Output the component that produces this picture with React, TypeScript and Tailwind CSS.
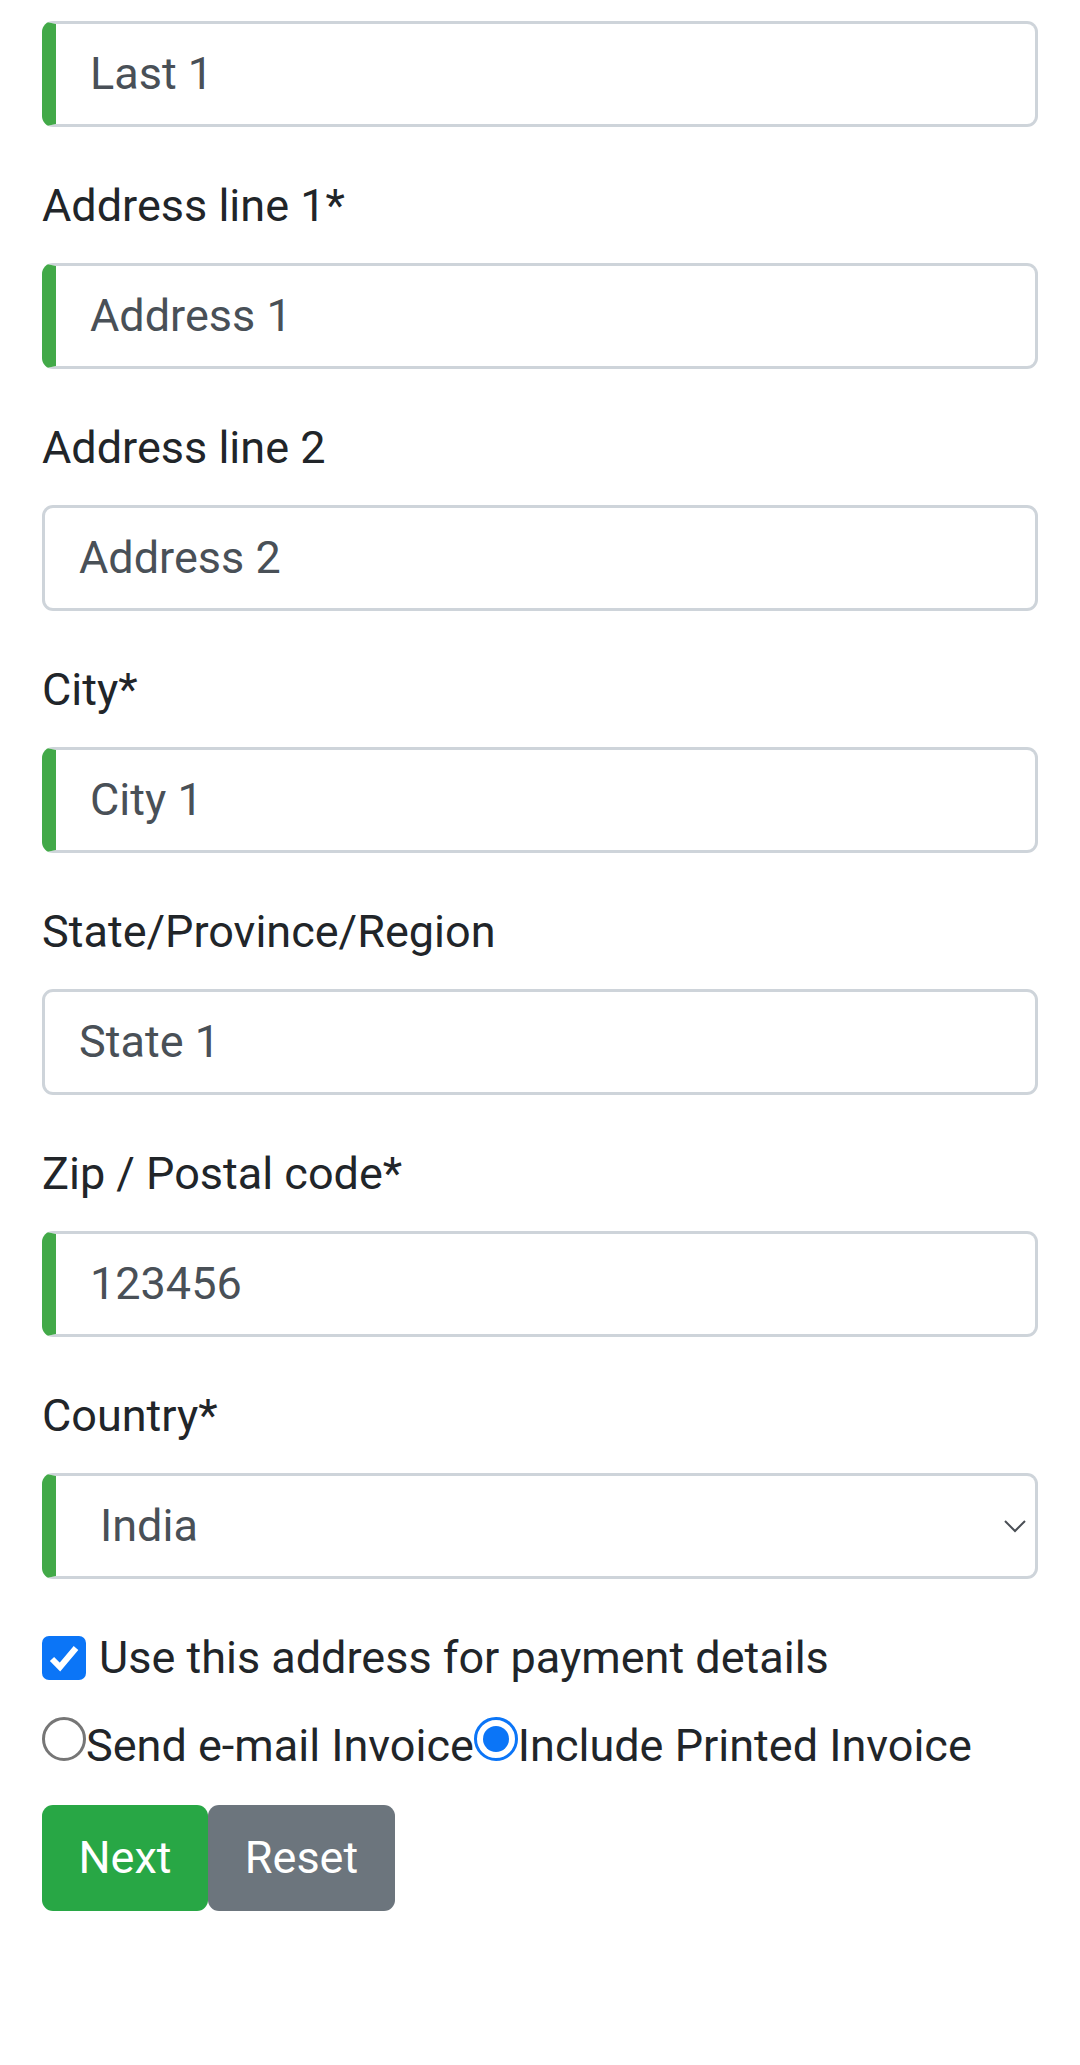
import React from "react"

const font = { fontFamily: "Roboto, 'Liberation Sans', sans-serif" }

interface FieldProps {
    label?: string
    value: string
    valid?: boolean
}

function Field({ label, value, valid }: FieldProps) {
    return (
        <div className="mb-[46px]">
            {label && <label className="block mb-[24px] text-[45px] leading-[66px] text-[#212529]">{label}</label>}
            <input
                defaultValue={value}
                className={`block w-full h-[106px] rounded-[11px] border-[3px] border-[#ced4da] bg-white pr-[34px] pl-[34px] pb-[2px] text-[45px] text-[#495057] outline-none ${valid ? "border-l-[14px] border-l-[#42A948]" : ""}`}
            />
        </div>
    )
}

function Radio({ checked }: { checked?: boolean }) {
    return (
        <span className={`relative inline-block h-[44px] w-[44px] rounded-full border-[3px] bg-white align-baseline ${checked ? "border-[#0b75f7]" : "border-[#767676]"}`}>
            {checked && <span className="absolute left-[6px] top-[6px] h-[26px] w-[26px] rounded-full bg-[#0b75f7]" />}
        </span>
    )
}

export default function App() {
    return (
        <div className="min-h-[2065px] bg-white pt-[21px] px-[42px]" style={font}>
            <Field value="Last 1" valid />
            <Field label="Address line 1*" value="Address 1" valid />
            <Field label="Address line 2" value="Address 2" />
            <Field label="City*" value="City 1" valid />
            <Field label="State/Province/Region" value="State 1" />
            <Field label="Zip / Postal code*" value="123456" valid />

            <div className="mb-[46px]">
                <label className="block mb-[24px] text-[45px] leading-[66px] text-[#212529]">Country*</label>
                <div className="relative">
                    <select
                        defaultValue="India"
                        className="block w-full h-[106px] appearance-none rounded-[11px] border-[3px] border-l-[14px] border-[#ced4da] border-l-[#42A948] bg-white pl-[44px] text-[45px] text-[#495057] outline-none"
                    >
                        <option>India</option>
                        <option>USA</option>
                    </select>
                    <svg className="pointer-events-none absolute right-[12px] top-[47px]" width="22" height="13" viewBox="0 0 22 13" fill="none">
                        <path d="M1 1l10 10L21 1" stroke="#4a4f55" strokeWidth="2" />
                    </svg>
                </div>
            </div>

            <div className="flex items-center h-[66px] text-[45px] text-[#212529]">
                <span className="flex h-[44px] w-[44px] shrink-0 items-center justify-center rounded-[7px] bg-[#0b75f7]">
                    <svg width="32" height="28" viewBox="0 0 32 28" fill="none">
                        <path d="M4 15l8 8L28 4" stroke="white" strokeWidth="6" />
                    </svg>
                </span>
                <span className="ml-[13px]">Use this address for payment details</span>
            </div>

            <div className="h-[66px] mt-[22px] whitespace-nowrap text-[45px] leading-[66px] text-[#212529]">
                <Radio />
                <span>Send e-mail Invoice</span>
                <Radio checked />
                <span>Include Printed Invoice</span>
            </div>

            <div className="flex mt-[26px]">
                <button className="h-[106px] w-[166px] rounded-[11px] bg-[#28a745] text-[45px] text-white">Next</button>
                <button className="h-[106px] w-[187px] rounded-[11px] bg-[#6c757d] text-[45px] text-white">Reset</button>
            </div>
        </div>
    )
}
